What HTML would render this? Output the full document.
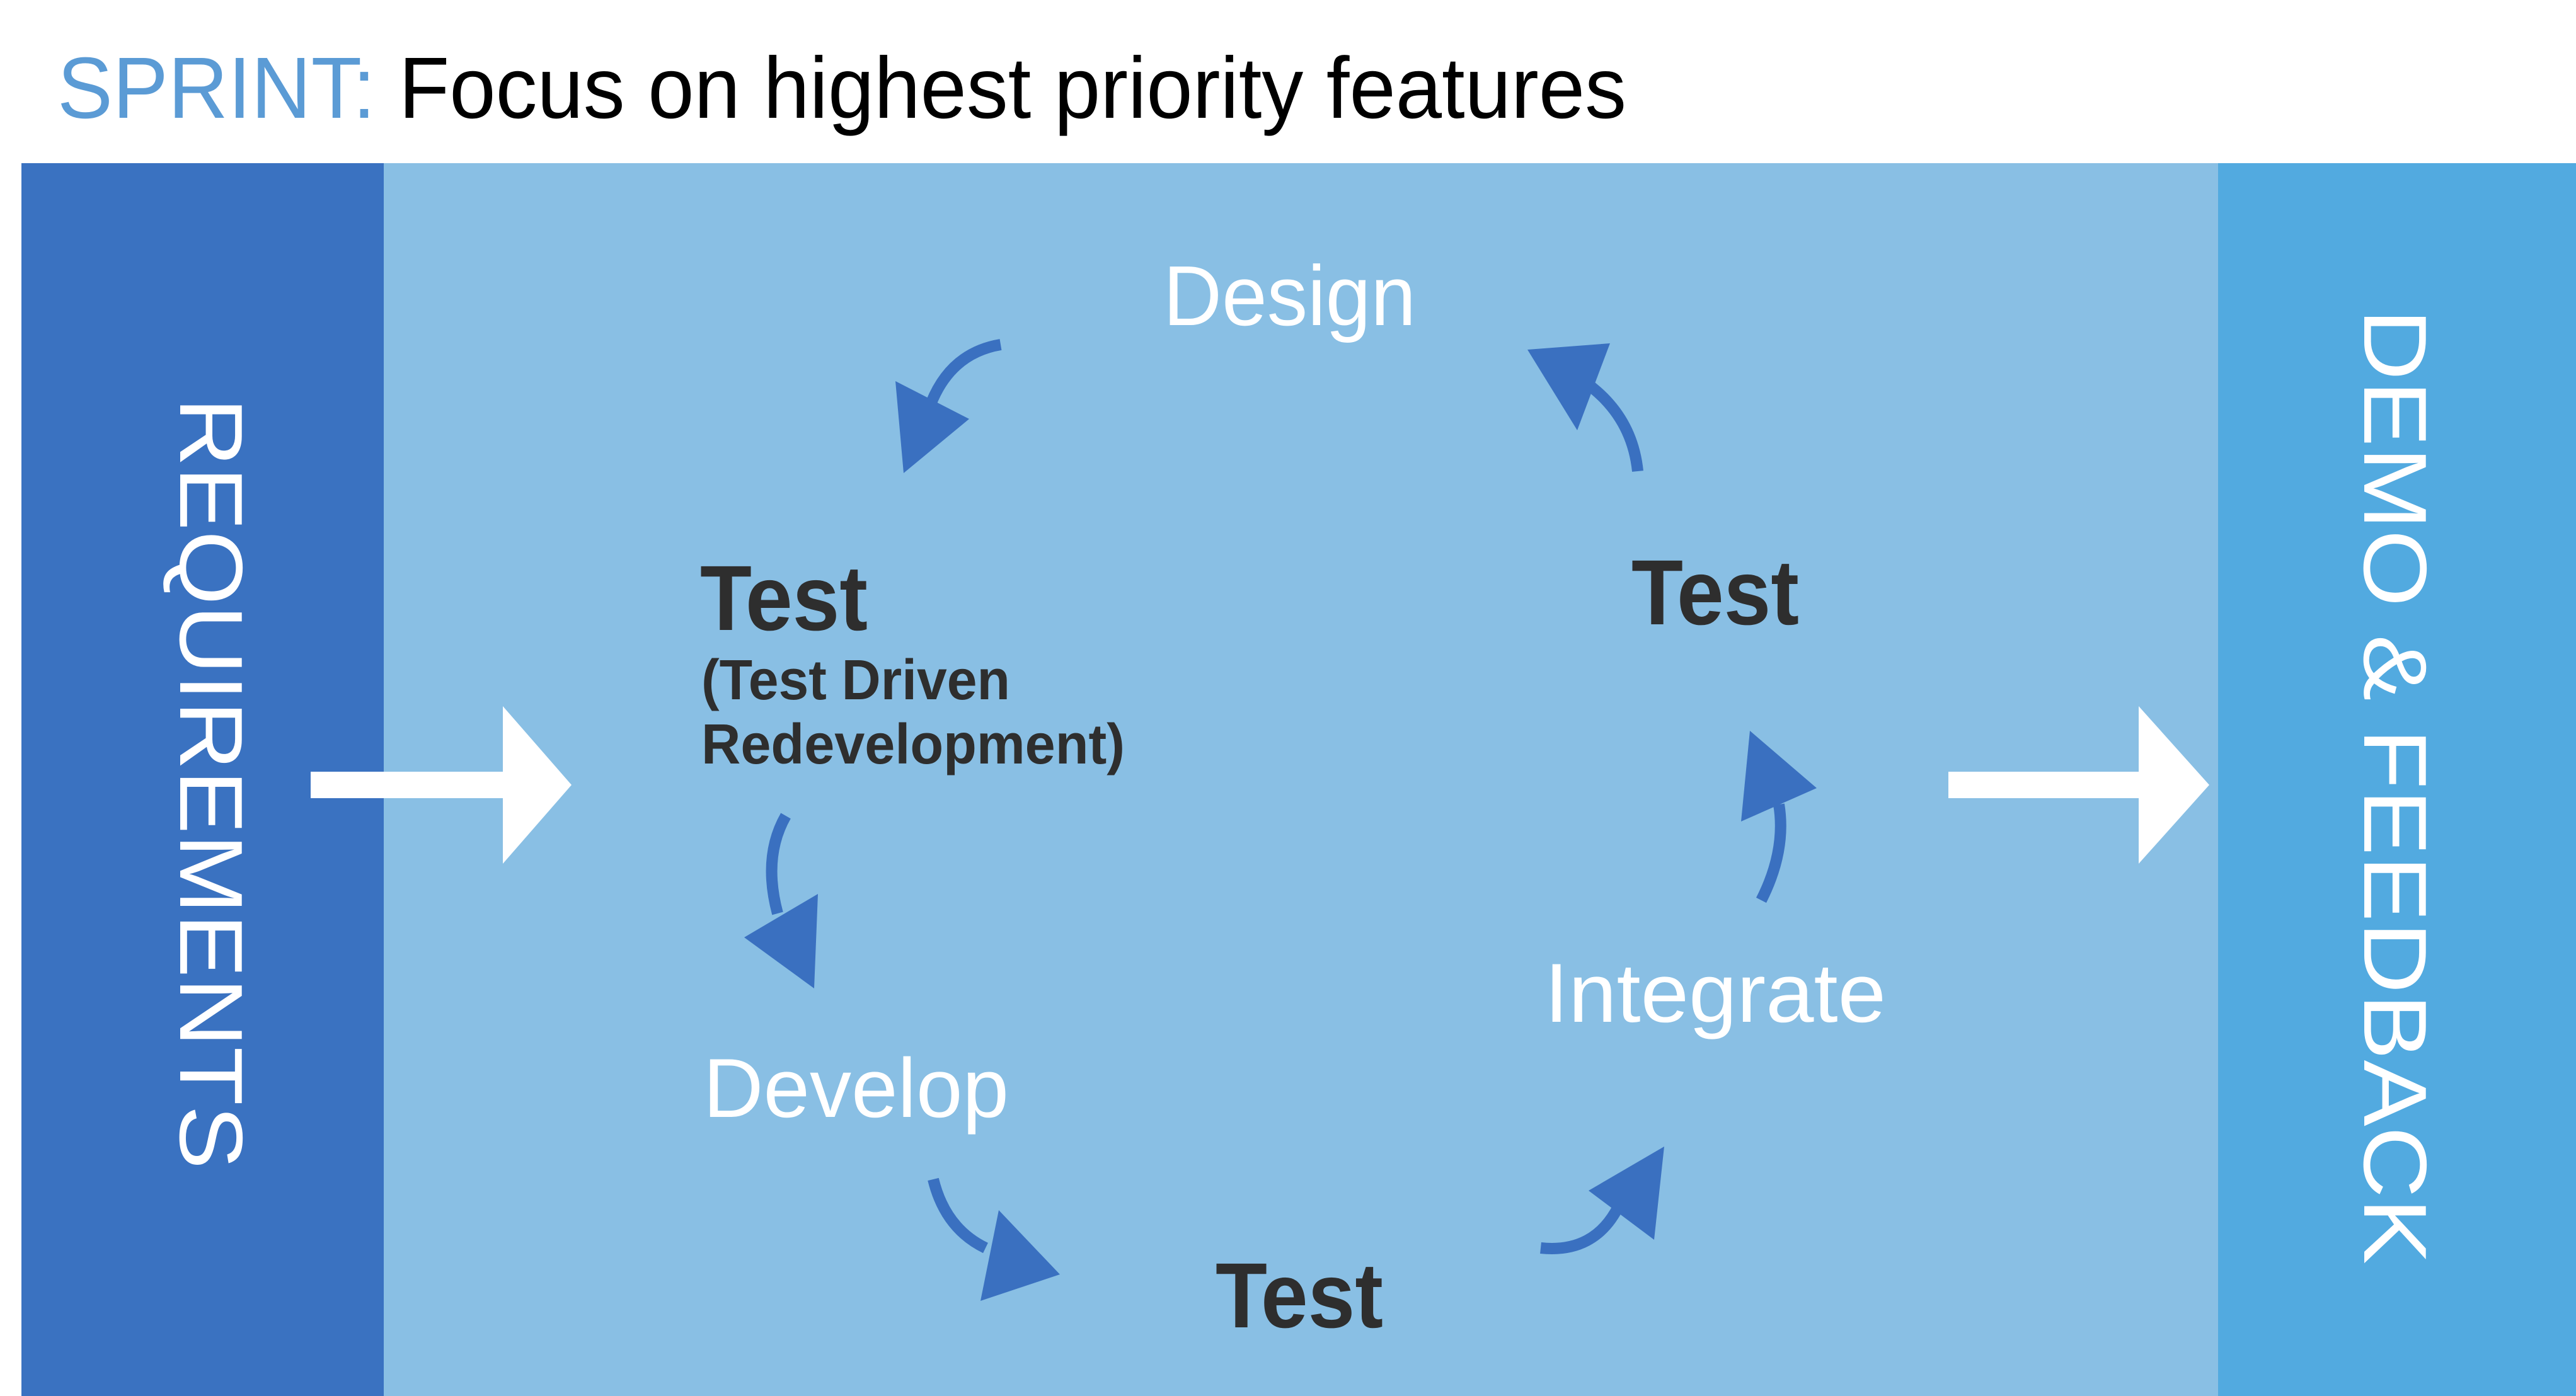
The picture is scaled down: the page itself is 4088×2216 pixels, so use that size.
<!DOCTYPE html>
<html><head><meta charset="utf-8"><style>
html,body{margin:0;padding:0;background:#fff;}
svg{display:block;}
</style></head><body>
<svg width="4088" height="2216" viewBox="0 0 4088 2216" xmlns="http://www.w3.org/2000/svg" font-family="Liberation Sans, sans-serif">
<rect x="0" y="0" width="4088" height="2216" fill="#fff"/>
<text x="91" y="187" font-size="138" textLength="2490" lengthAdjust="spacingAndGlyphs"><tspan fill="#5b9bd5">SPRINT:</tspan><tspan fill="#000"> Focus on highest priority features</tspan></text>
<rect x="34" y="259" width="575" height="1957" fill="#3a72c1"/>
<rect x="609" y="259" width="2911" height="1957" fill="#89bfe4"/>
<rect x="3520" y="259" width="568" height="1957" fill="#52aae0"/>

<text x="286" y="631" font-size="142" fill="#fff" transform="rotate(90 286 631)" textLength="1225" lengthAdjust="spacingAndGlyphs">REQUIREMENTS</text>
<text x="3752" y="490" font-size="142" fill="#fff" transform="rotate(90 3752 490)" textLength="1517" lengthAdjust="spacingAndGlyphs">DEMO &amp; FEEDBACK</text>

<rect x="493" y="1225" width="310" height="42" fill="#fff"/>
<polygon points="798,1121 907,1246 798,1371" fill="#fff"/>
<rect x="3092" y="1225" width="307" height="42" fill="#fff"/>
<polygon points="3394,1121 3506,1246 3394,1371" fill="#fff"/>

<text x="1846" y="516" font-size="135" fill="#fff" textLength="401" lengthAdjust="spacingAndGlyphs">Design</text>
<text x="1111" y="1000" font-size="147" font-weight="bold" fill="#2e2e2e" textLength="266" lengthAdjust="spacingAndGlyphs">Test</text>
<text x="1113" y="1110" font-size="90" font-weight="bold" fill="#2e2e2e" textLength="490" lengthAdjust="spacingAndGlyphs">(Test Driven</text>
<text x="1113" y="1212" font-size="90" font-weight="bold" fill="#2e2e2e" textLength="672" lengthAdjust="spacingAndGlyphs">Redevelopment)</text>
<text x="2589" y="991" font-size="147" font-weight="bold" fill="#2e2e2e" textLength="266" lengthAdjust="spacingAndGlyphs">Test</text>
<text x="2451" y="1622" font-size="133" fill="#fff" textLength="542" lengthAdjust="spacingAndGlyphs">Integrate</text>
<text x="1116" y="1773" font-size="133" fill="#fff" textLength="485" lengthAdjust="spacingAndGlyphs">Develop</text>
<text x="1929" y="2107" font-size="147" font-weight="bold" fill="#2e2e2e" textLength="266" lengthAdjust="spacingAndGlyphs">Test</text>

<g fill="none" stroke="#3a70c0" stroke-width="18">
<path d="M1588,547 Q1510,560 1478,639"/>
<path d="M2599,748 Q2590,660 2516,607"/>
<path d="M2795,1429 Q2835,1350 2823,1277"/>
<path d="M2445,1981 Q2530,1990 2568,1916"/>
<path d="M1481,1872 Q1500,1950 1564,1981"/>
<path d="M1247,1295 Q1210,1360 1234,1450"/>
</g>
<g fill="#3a70c0">
<polygon points="1421,605 1434,751 1538,665"/>
<polygon points="2424,555 2555,545 2503,683"/>
<polygon points="2777,1160 2883,1251 2763,1304"/>
<polygon points="2521,1890 2641,1820 2625,1968"/>
<polygon points="1585,1921 1682,2023 1556,2065"/>
<polygon points="1181,1488 1298,1419 1292,1569"/>
</g>
</svg>
</body></html>
